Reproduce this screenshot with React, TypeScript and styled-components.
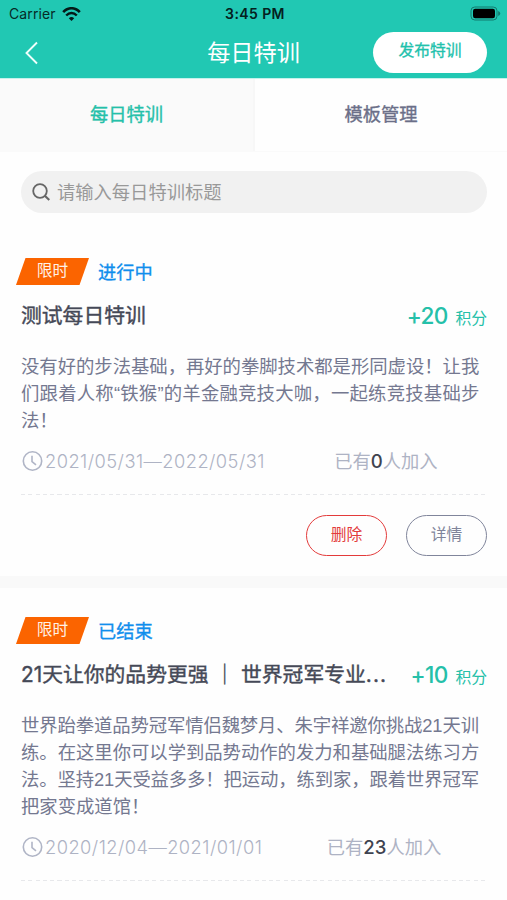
import React from "react";
import styled, { createGlobalStyle } from "styled-components";

const cjk = `"Noto Sans CJK SC", sans-serif`;

const GlobalStyle = createGlobalStyle`
  * { box-sizing: border-box; }
  html, body { margin: 0; padding: 0; background: #fff; }
  body { height: 900px; overflow: hidden; font-family: Inter, ${cjk}; }
`;

const Screen = styled.div`
  width: 507px;
  height: 900px;
  overflow: hidden;
  background: #fefefe;
`;

const Header = styled.header`
  height: 78px;
  background: #21c8b3;
`;

const StatusBar = styled.div`
  height: 28px;
  display: grid;
  grid-template-columns: 1fr auto 1fr;
  align-items: center;
  padding: 0 6px 0 9px;
  color: #062b27;
`;

const Carrier = styled.div`
  display: flex;
  align-items: center;
  gap: 6px;
  font-size: 14px;
  line-height: 28px;
  letter-spacing: 0.1px;
`;

const Clock = styled.div`
  font-size: 14px;
  font-weight: 600;
  line-height: 28px;
  letter-spacing: 0.4px;
  color: #04211e;
`;

const BatterySlot = styled.div`
  display: flex;
  justify-content: flex-end;
  padding-bottom: 2px;
`;

const NavBar = styled.div`
  height: 50px;
  display: grid;
  grid-template-columns: 134px 1fr 134px;
  align-items: center;
`;

const BackSlot = styled.div`
  padding-left: 24px;
  display: flex;
`;

const NavTitle = styled.h1`
  margin: 0;
  text-align: center;
  color: #fff;
  height: 48px;
  font: 400 23.2px/45px ${cjk};
`;

const PublishButton = styled.button`
  width: 114px;
  height: 41px;
  margin-top: -1px;
  padding: 0 0 5px;
  border: 0;
  border-radius: 21px;
  background: #fff;
  color: #21c1ac;
  font: 400 15.8px/34px ${cjk};
  -webkit-text-stroke: 0.3px currentColor;
`;

const Tabs = styled.nav`
  height: 74px;
  display: grid;
  grid-template-columns: 253px 1fr;
  border-top: 1px solid #c5f2ec;
  border-bottom: 1px solid #fafafa;
`;

const Tab = styled.div<{ $active?: boolean }>`
  text-align: center;
  font: 400 18.3px/69px ${cjk};
  -webkit-text-stroke: 0.35px currentColor;
  color: ${(p) => (p.$active ? "#25c0a9" : "#6b6f88")};
  background: ${(p) => (p.$active ? "#fafafa" : "#fefefe")};
  border-left: ${(p) => (p.$active ? "0" : "2px solid #f7f7f7")};
`;

const SearchBox = styled.div`
  height: 42px;
  margin: 19px 20px 0 21px;
  padding-left: 11px;
  border-radius: 21px;
  background: #f1f1f1;
  display: flex;
  align-items: center;
  gap: 7px;
`;

const Placeholder = styled.span`
  font: 400 18.3px/40px ${cjk};
  height: 42px;
  color: #999;
`;

const Card = styled.article`
  padding: 0 20px 0 21px;
`;

const StatusRow = styled.div`
  height: 27px;
  display: flex;
  align-items: center;
  margin-left: -5px;
`;

const Tag = styled.span`
  width: 73px;
  height: 27px;
  clip-path: polygon(13% 0, 100% 0, 87% 100%, 0 100%);
  background: #fb6400;
  color: #fff1e6;
  text-align: center;
  font: 400 15.7px/24px ${cjk};
`;

const State = styled.span`
  margin-left: 9px;
  font: 400 18.2px/27px ${cjk};
  -webkit-text-stroke: 0.35px currentColor;
  color: #108eed;
`;

const TitleRow = styled.div`
  display: flex;
  justify-content: space-between;
  height: 34px;
  margin-top: 14px;
`;

const Title = styled.h2`
  margin: 0;
  white-space: pre;
  font: 400 20.8px/34px Inter, ${cjk};
  -webkit-text-stroke: 0.4px currentColor;
  color: #454957;
`;

const Ellipsis = styled.span`
  letter-spacing: 1.1px;
`;

const Points = styled.div`
  color: #25c0a9;
  white-space: nowrap;
  font: 400 15.8px/37px ${cjk};
`;

const PointValue = styled.span`
  font-family: Inter, sans-serif;
  font-weight: 500;
  font-size: 22.6px;
  letter-spacing: -0.6px;
  line-height: 34px;
  margin-right: 7.6px;
`;

const Description = styled.p`
  margin: 20px 0 0;
  color: #747890;
`;

const Line = styled.span<{ $spacing?: number }>`
  display: block;
  white-space: nowrap;
  font: 400 18.36px/27px "Liberation Sans", ${cjk};
  letter-spacing: ${(p) => p.$spacing ?? -0.03}px;
`;

const MetaRow = styled.div`
  height: 26px;
  margin-top: 13px;
  display: grid;
  grid-template-columns: 24px 1fr 224px;
  align-items: center;
  color: #aeb3c4;
  font-size: 18.3px;
  line-height: 26px;
`;

const DateRange = styled.span`
  font-family: Inter, ${cjk};
  font-weight: 300;
  font-size: 18.3px;
  letter-spacing: 0.45px;
  white-space: nowrap;
`;

const Joined = styled.span`
  font-family: ${cjk};
  justify-self: center;
  white-space: nowrap;
  margin-right: -18px;
`;

const Count = styled.b`
  font-family: Inter, sans-serif;
  font-weight: 500;
  font-size: 18.6px;
  color: #3f4350;
`;

const Dashes = styled.div`
  height: 1px;
  margin-top: 21px;
  background: repeating-linear-gradient(90deg, #e7e8eb 0 4px, transparent 4px 7.3px);
`;

const Actions = styled.div`
  display: flex;
  justify-content: flex-end;
  gap: 19px;
  margin-top: 20px;
`;

const Action = styled.button<{ $danger?: boolean }>`
  width: 81px;
  height: 41px;
  padding: 0 0 5px;
  border-radius: 21px;
  border: 1.3px solid currentColor;
  background: transparent;
  color: ${(p) => (p.$danger ? "#e33b3b" : "#80859b")};
  font: 400 15.8px/33px ${cjk};
`;

const Divider = styled.div`
  height: 12px;
  margin: 20px 0 29px;
  background: #f9f9f9;
`;

const WifiIcon = () => (
  <svg width="19" height="15" viewBox="0 0 19 15" fill="none">
    <path d="M1.2 5.2C6-.1 13-.1 17.8 5.2" stroke="#041a18" strokeWidth="2.6" />
    <path d="M4.2 8.5c3.2-3.3 7.4-3.3 10.6 0" stroke="#041a18" strokeWidth="2.4" />
    <path d="M6.8 11.2q2.7-2.5 5.4 0L9.5 14z" fill="#041a18" />
  </svg>
);

const BatteryIcon = () => (
  <svg width="31" height="15" viewBox="0 0 31 15">
    <rect x="1" y="1" width="26" height="13" rx="3.8" fill="none" stroke="#137b6f" />
    <rect x="3" y="2.8" width="22" height="9.4" rx="2.2" fill="#000" />
    <path d="M28.2 5v5q2-.7 2-2.5t-2-2.5z" fill="#137b6f" />
  </svg>
);

const BackIcon = () => (
  <svg width="16" height="24" viewBox="0 0 16 24">
    <path d="M13 1.5 2.5 12 13 22.5" fill="none" stroke="#effffb" strokeWidth="1.9" />
  </svg>
);

const SearchIcon = () => (
  <svg width="18" height="18" viewBox="0 0 18 18" fill="none" stroke="#666" strokeWidth="1.8">
    <circle cx="8" cy="8" r="6.8" />
    <path d="m12.8 12.8 4.5 4.2" strokeWidth="2.2" />
  </svg>
);

const ClockIcon = () => (
  <svg width="24" height="22" viewBox="0 0 24 22" fill="none" stroke="#b0b5c6" strokeWidth="1.6">
    <circle cx="11.5" cy="11" r="9.2" />
    <path d="M11 5.8v5.7l4 3.3" />
  </svg>
);

type Training = {
  state: string;
  title: string;
  truncated?: boolean;
  points: string;
  lines: { text: string; spacing?: number }[];
  dates: string;
  count: string;
  actions?: boolean;
};

const trainings: Training[] = [
  {
    state: "进行中",
    title: "测试每日特训",
    points: "+20",
    lines: [
      { text: "没有好的步法基础，再好的拳脚技术都是形同虚设！让我" },
      { text: "们跟着人称“铁猴”的羊金融竞技大咖，一起练竞技基础步", spacing: 0.22 },
      { text: "法！" },
    ],
    dates: "2021/05/31—2022/05/31",
    count: "0",
    actions: true,
  },
  {
    state: "已结束",
    title: "21天让你的品势更强 ｜ 世界冠军专业",
    truncated: true,
    points: "+10",
    lines: [
      { text: "世界跆拳道品势冠军情侣魏梦月、朱宇祥邀你挑战21天训", spacing: -0.12 },
      { text: "练。在这里你可以学到品势动作的发力和基础腿法练习方" },
      { text: "法。坚持21天受益多多！把运动，练到家，跟着世界冠军", spacing: -0.12 },
      { text: "把家变成道馆！" },
    ],
    dates: "2020/12/04—2021/01/01",
    count: "23",
  },
];

const TrainingCard = ({ item }: { item: Training }) => (
  <Card>
    <StatusRow>
      <Tag>限时</Tag>
      <State>{item.state}</State>
    </StatusRow>
    <TitleRow>
      <Title>
        {item.title}
        {item.truncated && <Ellipsis>...</Ellipsis>}
      </Title>
      <Points>
        <PointValue>{item.points}</PointValue>积分
      </Points>
    </TitleRow>
    <Description>
      {item.lines.map((l) => (
        <Line key={l.text} $spacing={l.spacing}>{l.text}</Line>
      ))}
    </Description>
    <MetaRow>
      <ClockIcon />
      <DateRange>{item.dates}</DateRange>
      <Joined>
        已有<Count>{item.count}</Count>人加入
      </Joined>
    </MetaRow>
    <Dashes />
    {item.actions && (
      <Actions>
        <Action $danger>删除</Action>
        <Action>详情</Action>
      </Actions>
    )}
  </Card>
);

const FirstGap = styled.div`
  height: 45px;
`;

export default function App() {
  return (
    <Screen>
      <GlobalStyle />
      <Header>
        <StatusBar>
          <Carrier>
            Carrier <WifiIcon />
          </Carrier>
          <Clock>3:45 PM</Clock>
          <BatterySlot>
            <BatteryIcon />
          </BatterySlot>
        </StatusBar>
        <NavBar>
          <BackSlot>
            <BackIcon />
          </BackSlot>
          <NavTitle>每日特训</NavTitle>
          <PublishButton>发布特训</PublishButton>
        </NavBar>
      </Header>
      <Tabs>
        <Tab $active>每日特训</Tab>
        <Tab>模板管理</Tab>
      </Tabs>
      <SearchBox>
        <SearchIcon />
        <Placeholder>请输入每日特训标题</Placeholder>
      </SearchBox>
      <FirstGap />
      <TrainingCard item={trainings[0]} />
      <Divider />
      <TrainingCard item={trainings[1]} />
    </Screen>
  );
}
